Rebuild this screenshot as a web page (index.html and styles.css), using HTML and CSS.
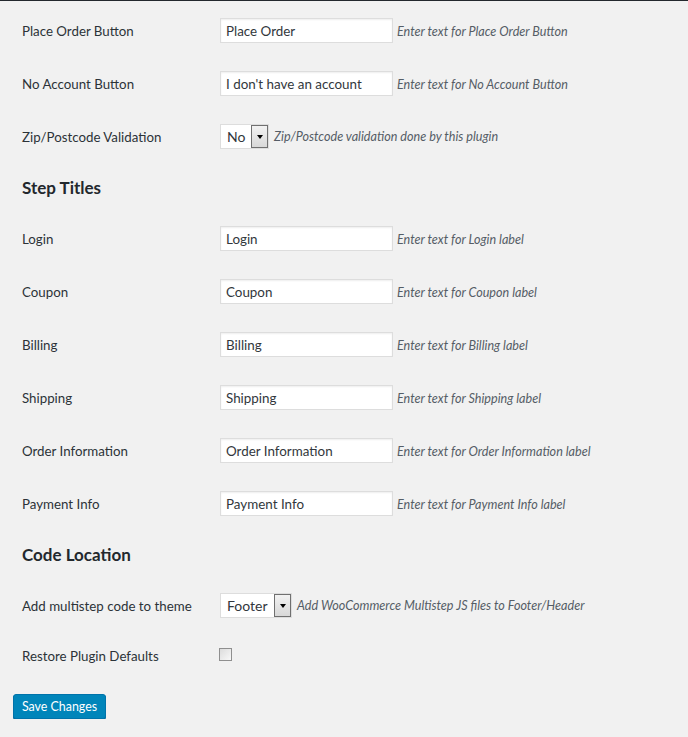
FILE: index.html
```html
<!DOCTYPE html>
<html>
<head>
<meta charset="utf-8">
<link rel="stylesheet" href="styles.css">
</head>
<body>
<div class="topbar"></div>
<form class="page">
  <div class="row">
    <div class="label">Place Order Button</div>
    <div class="field"><input class="text" type="text" value="Place Order"><span class="desc">Enter text for Place Order Button</span></div>
  </div>
  <div class="row">
    <div class="label">No Account Button</div>
    <div class="field"><input class="text" type="text" value="I don't have an account"><span class="desc">Enter text for No Account Button</span></div>
  </div>
  <div class="row">
    <div class="label">Zip/Postcode Validation</div>
    <div class="field"><span class="select sel-no"><span class="sel-val">No</span><span class="arrow"></span></span><span class="desc desc-sel">Zip/Postcode validation done by this plugin</span></div>
  </div>
  <h2 class="heading">Step Titles</h2>
  <div class="row">
    <div class="label">Login</div>
    <div class="field"><input class="text" type="text" value="Login"><span class="desc">Enter text for Login label</span></div>
  </div>
  <div class="row">
    <div class="label">Coupon</div>
    <div class="field"><input class="text" type="text" value="Coupon"><span class="desc">Enter text for Coupon label</span></div>
  </div>
  <div class="row">
    <div class="label">Billing</div>
    <div class="field"><input class="text" type="text" value="Billing"><span class="desc">Enter text for Billing label</span></div>
  </div>
  <div class="row">
    <div class="label">Shipping</div>
    <div class="field"><input class="text" type="text" value="Shipping"><span class="desc">Enter text for Shipping label</span></div>
  </div>
  <div class="row">
    <div class="label">Order Information</div>
    <div class="field"><input class="text" type="text" value="Order Information"><span class="desc">Enter text for Order Information label</span></div>
  </div>
  <div class="row">
    <div class="label">Payment Info</div>
    <div class="field"><input class="text" type="text" value="Payment Info"><span class="desc">Enter text for Payment Info label</span></div>
  </div>
  <h2 class="heading">Code Location</h2>
  <div class="row">
    <div class="label">Add multistep code to theme</div>
    <div class="field"><span class="select sel-footer"><span class="sel-val">Footer</span><span class="arrow"></span></span><span class="desc desc-sel">Add WooCommerce Multistep JS files to Footer/Header</span></div>
  </div>
  <div class="row row-check">
    <div class="label">Restore Plugin Defaults</div>
    <div class="field"><input class="check" type="checkbox"></div>
  </div>
  <div class="submit"><button class="button" type="button">Save Changes</button></div>
</form>
</body>
</html>
```
FILE: styles.css
```css
html, body {
  margin: 0;
  padding: 0;
  background: #f1f1f1;
}
body {
  font-family: Lato, "Open Sans", sans-serif;
  color: #23282d;
  font-size: 14px;
}
.topbar {
  height: 1px;
  background: #23282d;
}
.page {
  padding: 3px 0 0 13px;
  margin: 0;
}
.row {
  display: flex;
  align-items: center;
  height: 53px;
}
.row-check {
  height: 46px;
}
.label {
  width: 198px;
  padding-left: 9px;
  flex: none;
  font-size: 13.3px;
  color: #2c3338;
  padding-top: 1px;
}
.field {
  display: flex;
  align-items: center;
}
.text {
  box-sizing: border-box;
  width: 173px;
  height: 25px;
  margin: 0;
  padding: 0 5px;
  border: 1px solid #ddd;
  background: #fff;
  box-shadow: inset 0 1px 2px rgba(0,0,0,.07);
  font-family: inherit;
  font-size: 13.4px;
  color: #32373c;
  outline: none;
}
.desc {
  margin-left: 4px;
  padding-top: 2px;
  font-style: italic;
  font-size: 12.6px;
  color: #555d66;
}
.desc-sel {
  margin-left: 5px;
  padding-top: 0;
}
.select {
  box-sizing: border-box;
  display: inline-flex;
  align-items: center;
  justify-content: space-between;
  height: 25px;
  border: 1px solid #ddd;
  background: #fff;
  padding-left: 6px;
  font-size: 14px;
  color: #32373c;
}
.sel-no { width: 49px; }
.sel-footer { width: 72px; }
.arrow {
  box-sizing: border-box;
  width: 17px;
  height: 23px;
  border: 1px solid #707070;
  background: linear-gradient(#f2f2f2, #d8d8d8);
  display: flex;
  align-items: center;
  justify-content: center;
}
.arrow::after {
  content: "";
  width: 0;
  height: 0;
  border-left: 3.5px solid transparent;
  border-right: 3.5px solid transparent;
  border-top: 4px solid #000;
}
.heading {
  margin: 0;
  height: 49px;
  display: flex;
  align-items: center;
  padding-left: 9px;
  font-size: 17px;
  font-weight: 700;
  color: #23282d;
}
.check {
  appearance: none;
  -webkit-appearance: none;
  box-sizing: border-box;
  width: 13px;
  height: 13px;
  margin: -2px 0 0 -1px;
  border: 1px solid #8f8f8f;
  background: linear-gradient(135deg, #dcdcdc, #f8f8f8);
}
.submit {
  padding-top: 16px;
}
.button {
  box-sizing: border-box;
  width: 93px;
  height: 25px;
  padding: 0;
  border: 1px solid #0073aa;
  border-radius: 3px;
  background: #0085ba;
  box-shadow: 0 1px 0 #006799;
  color: #fff;
  font-family: inherit;
  font-size: 12.4px;
}
```
